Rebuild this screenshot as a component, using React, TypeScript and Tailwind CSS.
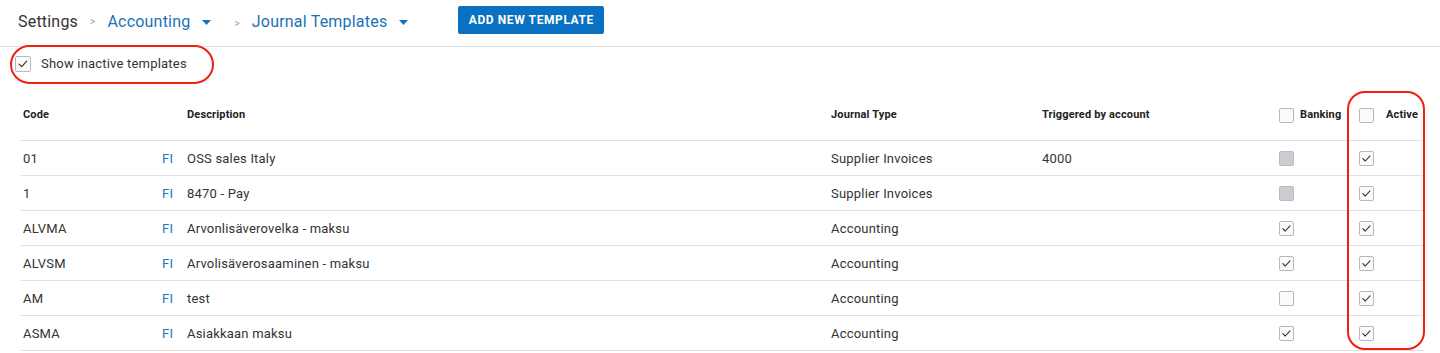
import React from "react";

const font = { fontFamily: "Roboto, 'Liberation Sans', sans-serif" };

function Box({ checked = false, disabled = false, size = 15 }: { checked?: boolean; disabled?: boolean; size?: number }) {
  return (
    <div
      className={
        "relative shrink-0 rounded-[2px] border " +
        (disabled ? "border-[#b8bdc1] bg-[#c9cdd1]" : "border-[#b5b9bd] bg-[#fbfbfb]")
      }
      style={{ width: size, height: size }}
    >
      {checked && (
        <svg width={size} height={size} viewBox="0 0 15 15" className="absolute left-[-1px] top-[-1px]">
          <path d="M3.8 7.6 L6.3 10 L11 4.9" fill="none" stroke="#333" strokeWidth="1.1" strokeLinecap="round" strokeLinejoin="round" />
        </svg>
      )}
    </div>
  );
}

function Caret() {
  return (
    <svg width="9" height="5" viewBox="0 0 9 5" className="ml-[12px] mt-[2px]">
      <path d="M0 0 L9 0 L4.5 5 Z" fill="#1a73b9" />
    </svg>
  );
}

function Sep() {
  return <span className="mx-[12px] text-[10px] text-[#9a9a9a]">&gt;</span>;
}

const rows = [
  { code: "01", desc: "OSS sales Italy", type: "Supplier Invoices", acc: "4000", bank: "disabled" },
  { code: "1", desc: "8470 - Pay", type: "Supplier Invoices", acc: "", bank: "disabled" },
  { code: "ALVMA", desc: "Arvonlisäverovelka - maksu", type: "Accounting", acc: "", bank: "checked" },
  { code: "ALVSM", desc: "Arvolisäverosaaminen - maksu", type: "Accounting", acc: "", bank: "checked" },
  { code: "AM", desc: "test", type: "Accounting", acc: "", bank: "empty" },
  { code: "ASMA", desc: "Asiakkaan maksu", type: "Accounting", acc: "", bank: "checked" },
];

const cols = "grid grid-cols-[139px_25px_644px_211px_237px_80px_68px]";

export default function App() {
  return (
    <div className="relative h-[353px] w-[1440px] overflow-hidden bg-white" style={font}>
      {/* Top bar */}
      <div className="flex h-[47px] items-center border-b border-[#dedede] pl-[18px] pb-[6px]">
        <div className="mt-[3px] flex items-center text-[16px] tracking-[0.2px]">
          <span className="text-[#333]">Settings</span>
          <Sep />
          <span className="text-[#1a73b9]">Accounting</span>
          <Caret />
          <span className="ml-[11px]"><Sep /></span>
          <span className="text-[#1a73b9]">Journal Templates</span>
          <Caret />
        </div>
        <button className="ml-[50px] flex h-[28px] w-[146px] items-center justify-center rounded-[2px] bg-[#0a70c1] text-[12px] font-bold tracking-[0.6px] text-white">
          ADD NEW TEMPLATE
        </button>
      </div>

      {/* Show inactive */}
      <div className="flex h-[32px] items-center pl-[15px] pt-[1px]">
        <Box checked size={16} />
        <span className="ml-[10px] text-[13px] tracking-[0.2px] text-[#333]">Show inactive templates</span>
      </div>

      {/* Table */}
      <div className="mt-[11px] ml-[21px] w-[1404px]">
        <div className={cols + " h-[51px] items-center border-b border-[#e0e0e0] pt-[1px] text-[11px] font-bold tracking-[0.15px] text-[#222]"}>
          <div className="pl-[2px]">Code</div>
          <div />
          <div className="pl-[2px]">Description</div>
          <div className="pl-[2px]">Journal Type</div>
          <div className="pl-[2px]">Triggered by account</div>
          <div className="flex items-center pl-[2px]">
            <Box />
            <span className="ml-[6px]">Banking</span>
          </div>
          <div className="flex items-center pl-[2px]">
            <Box />
            <span className="ml-[12px]">Active</span>
          </div>
        </div>
        {rows.map((r) => (
          <div key={r.code} className={cols + " h-[35px] items-center border-b border-[#e0e0e0] pt-[1px] text-[13px] tracking-[0.2px] text-[#333]"}>
            <div className="pl-[2px]">{r.code}</div>
            <div className="pl-[2px] text-[#1a78c2]">FI</div>
            <div className="pl-[2px]">{r.desc}</div>
            <div className="pl-[2px]">{r.type}</div>
            <div className="pl-[2px]">{r.acc}</div>
            <div className="pl-[2px]">
              <Box checked={r.bank === "checked"} disabled={r.bank === "disabled"} />
            </div>
            <div className="pl-[2px]">
              <Box checked />
            </div>
          </div>
        ))}
      </div>

      {/* Red annotations */}
      <div className="pointer-events-none absolute left-[10px] top-[45px] h-[39px] w-[204px] rounded-[20px] border-2 border-[#f0200f]" />
      <div className="pointer-events-none absolute left-[1347px] top-[91px] h-[259px] w-[78px] rounded-[18px] border-2 border-[#f0200f]" />
    </div>
  );
}
